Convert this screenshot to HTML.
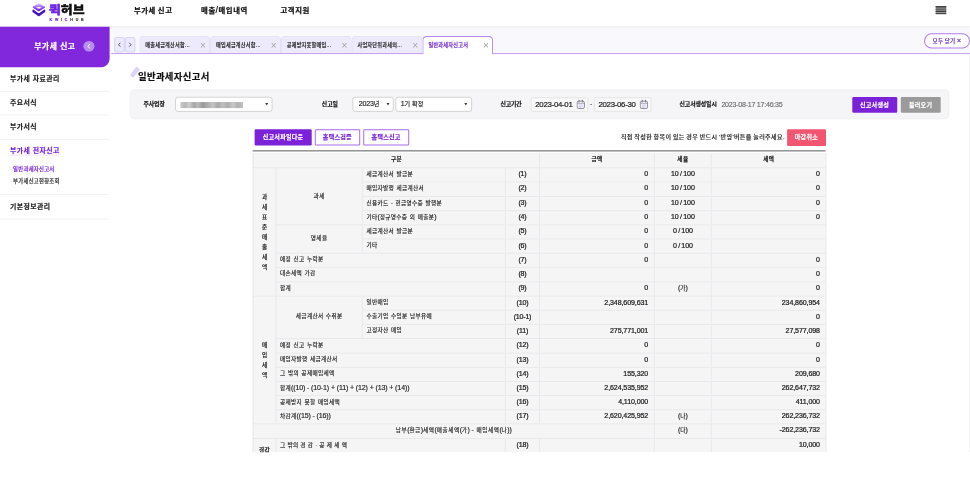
<!DOCTYPE html>
<html lang="ko"><head><meta charset="utf-8"><title>일반과세자신고서</title>
<style>
*{box-sizing:border-box;margin:0;padding:0}
html,body{width:970px;height:480px;overflow:hidden;background:#fff}
body{font-family:"Liberation Sans","Noto Sans CJK KR",sans-serif;color:#222}
#w{position:absolute;left:0;top:0;width:1920px;height:895px;overflow:hidden;transform:scale(0.505208);transform-origin:0 0;background:#fff;letter-spacing:0;-webkit-text-stroke:0.3px currentColor}
.a{position:absolute;white-space:nowrap}
.hd{left:0;top:0;width:1920px;height:53.5px;background:#fff;border-bottom:2px solid #ececee;z-index:0}
.menu{top:6.5px;height:26px;line-height:26px;font-size:14.5px;font-weight:700;color:#111;letter-spacing:1.25px;word-spacing:-1.6px;-webkit-text-stroke:.45px currentColor}
.lg1{left:96.5px;top:2px;height:36px;line-height:36px;font-size:22.5px;font-weight:900;letter-spacing:0;color:#111;transform:scaleX(1.13);transform-origin:0 50%;-webkit-text-stroke:0.9px currentColor}
.lg1 b{color:#6d24e2;font-weight:900}
.lg2{left:98px;top:34px;height:10px;line-height:10px;font-size:7px;font-weight:700;letter-spacing:5.6px;color:#333}
.lg2 b{color:#6a22d8}
.ham{left:1852px;top:12px;width:20.5px;height:16.4px;background:#aaa}
.ham i{display:block;height:2.6px;margin-bottom:2px;background:#3a3a3a}
.sbh{left:0;top:53px;width:216.5px;height:80px;background:#8228dc;border-radius:0 0 17px 0}
.sbt{left:68px;top:77.5px;height:28px;line-height:28px;font-size:15.3px;font-weight:700;color:#fff;letter-spacing:1.15px;-webkit-text-stroke:.45px currentColor}
.sbc{left:165.3px;top:80.8px;width:21.4px;height:21.4px;border-radius:50%;background:#b68eed}
.sbi{left:0;width:216px;border-bottom:1px solid #e4e4e4;padding-left:20px;font-size:13.6px;font-weight:700;color:#222;letter-spacing:.85px}
.sub{left:20px;font-size:10.6px;height:16px;line-height:16px;color:#333;letter-spacing:.5px;font-weight:500}
.sub s{text-decoration:none;-webkit-text-stroke:0;font-weight:400;color:#888;margin-right:-1.5px}
.tb{left:219.5px;top:53px;width:1700.5px;height:53.5px;background:linear-gradient(#f3f3f8,#f8f8fd 5px);border-bottom:2px solid #c6a0f3}
.nv{top:73.3px;width:21px;height:31px;background:#eceafc;border:2px solid #d7d4f2;border-radius:5px;font-size:14px;line-height:28px;text-align:center;color:#333;letter-spacing:0}
.tab{top:71px;width:140.5px;height:33.6px;background:#edeafb;border:1.5px solid #d2ccf2;font-weight:500;border-bottom:none;border-radius:9px 9px 0 0;font-size:10.2px;line-height:36px;padding-left:11px;color:#222;letter-spacing:.46px}
.tab.on{background:#fff;border:2px solid #b78bf1;border-bottom:none;height:37px;color:#6a1fd0;line-height:34px;padding-left:10.5px}
.tab u{position:absolute;right:7.5px;top:0;text-decoration:none;font-size:20px;color:#a5a5a5;letter-spacing:0;font-weight:300;-webkit-text-stroke:0}
.tab.on u{right:6.5px}
.pill{left:1829px;top:65.5px;width:90.5px;height:30.5px;border:2px solid #b17cf0;border-radius:16px;background:#fff;font-size:11px;line-height:26px;text-align:center;color:#5b1fc0;font-weight:500;letter-spacing:.55px;word-spacing:-1px}
.ttl{left:273px;top:137px;height:32px;line-height:32px;font-size:18.5px;font-weight:700;color:#111;letter-spacing:.75px;-webkit-text-stroke:.4px currentColor}
.sl{left:257.3px;top:132px;width:20px;height:22px}
.fb{left:257px;top:176.5px;width:1621.5px;height:59px;background:#f5f5f7;border:1px solid #ececf0;border-radius:9px}
.lb{top:193.5px;height:24px;line-height:24px;font-size:11.6px;font-weight:700;color:#1a1a1a;letter-spacing:-.15px;-webkit-text-stroke:.4px currentColor}
.sel{top:192px;height:29px;background:#fff;border:1.6px solid #b0b0b0;border-radius:5px;font-size:12px;line-height:26px;padding-left:11px;color:#222;letter-spacing:.4px}
.sel i{position:absolute;right:7.5px;top:11px;width:0;height:0;border:3.8px solid transparent;border-top:5px solid #3a3a3a;border-bottom:none}
.dt{top:192.5px;height:28px;background:#f9f9f9;border:1.7px solid #d6d6d6;border-radius:3px;font-size:15.5px;line-height:26px;padding-left:7.5px;color:#222;letter-spacing:-0.036em;-webkit-text-stroke:.4px currentColor}
.cal{position:absolute;right:5px;top:3.5px;width:17px;height:19px}
.btn{font-size:12px;font-weight:700;color:#fff;text-align:center;border-radius:2.5px;letter-spacing:.46px}
.tx{font-size:13px;color:#222}

.c{background:#f5f5f5;border-left:2.3px solid #e9e9ed;border-top:2.3px solid #e9e9ed;font-size:11.2px;color:#222;letter-spacing:.62px;word-spacing:.1em;font-weight:400}
.n{font-size:14px;letter-spacing:-0.015em;word-spacing:-1px;-webkit-text-stroke:0.45px currentColor;font-weight:400}
.p{font-size:14px;letter-spacing:-0.03em;-webkit-text-stroke:0.45px currentColor;font-weight:400}
.k{letter-spacing:-0.02em}
.e{font-size:14px;letter-spacing:-0.02em;word-spacing:0;font-weight:400;line-height:1px}
.v{display:flex;flex-direction:column;align-items:center;justify-content:center;line-height:20px;font-weight:500}
.hh{font-weight:700}
.vt{display:block;width:13px;white-space:normal;word-break:break-all;text-align:center;letter-spacing:0}
</style></head>
<body><div id="w">
<div class="a hd"></div>
<svg class="a" style="left:63.6px;top:5.6px" width="26" height="28" viewBox="0 0 26 28">
<defs><linearGradient id="g1" x1="0" y1="0" x2="0" y2="1"><stop offset="0" stop-color="#dccaff"/><stop offset=".5" stop-color="#9a58f7"/><stop offset="1" stop-color="#6a18ea"/></linearGradient></defs>
<path d="M1.8 15.6 L12.8 23.6 L23.8 15.6" fill="none" stroke="#4812c8" stroke-width="5" stroke-linecap="round" stroke-linejoin="round"/>
<path d="M12.8 1.6 L24.2 8.5 L12.8 15.4 L1.4 8.5 Z" fill="url(#g1)" stroke="url(#g1)" stroke-width="2.4" stroke-linejoin="round"/>
<path d="M12.8 7.4 L18.9 9.3 L12.8 11.4 L6.9 9.3 Z" fill="#fff"/>
</svg>
<div class="a lg1"><b>퀵</b>허브</div>
<div class="a lg2"><b>KWIC</b>HUB</div>
<div class="a menu" style="left:265px">부가세 신고</div>
<div class="a menu" style="left:398px">매출<span style="font-size:18px;line-height:1px;letter-spacing:.6px;font-weight:400;margin-left:-.5px">/</span>매입내역</div>
<div class="a menu" style="left:555px">고객지원</div>
<div class="a ham"><i></i><i></i><i></i><i></i></div>
<div class="a tb"></div>
<div class="a nv" style="left:225.5px"><svg width="17" height="27" viewBox="0.5 0.5 17 27"><path d="M10.8 10.2 L7 14 L10.8 17.8" fill="none" stroke="#333" stroke-width="1.7"/></svg></div><div class="a nv" style="left:246.5px"><svg width="17" height="27" viewBox="0.5 0.5 17 27"><path d="M7.2 10.2 L11 14 L7.2 17.8" fill="none" stroke="#333" stroke-width="1.7"/></svg></div>
<div class="a tab" style="left:275.5px">매출세금계산서합...<u>×</u></div>
<div class="a tab" style="left:415.5px">매입세금계산서합...<u>×</u></div>
<div class="a tab" style="left:555.5px">공제받지못할매입...<u>×</u></div>
<div class="a tab" style="left:695.5px">사업자단위과세의...<u>×</u></div>
<div class="a tab on" style="left:835.5px">일반과세자신고서<u>×</u></div>
<div class="a pill">모두 닫기 <span style="font-size:15px;line-height:1px;letter-spacing:0">×</span></div>
<div class="a sbh"></div><div class="a sbt">부가세 신고</div>
<div class="a sbc"></div><svg class="a" style="left:171px;top:86px" width="10" height="11" viewBox="0 0 10 11"><path d="M6.6 1.6 L2.9 5.5 L6.6 9.4" fill="none" stroke="#fff" stroke-width="1.9" stroke-linecap="round" stroke-linejoin="round"/></svg>
<div class="a sbi" style="top:133px;height:47.5px;line-height:46.5px">부가세 자료관리</div>
<div class="a sbi" style="top:180.5px;height:47.69999999999999px;line-height:46.69999999999999px">주요서식</div>
<div class="a sbi" style="top:228.2px;height:47.60000000000002px;line-height:46.60000000000002px">부가서식</div>
<div class="a sbi" style="top:275.8px;height:110.19999999999999px;line-height:43px;color:#7a22d8">부가세 전자신고</div>
<div class="a sbi" style="top:386px;height:48.39999999999998px;line-height:47.39999999999998px">기본정보관리</div>
<div class="a sub" style="top:326px;color:#7a22d8"><s>·</s> 일반과세자신고서</div>
<div class="a sub" style="top:350.5px"><s>·</s> 부가세신고현황조회</div>
<div class="a" style="left:1917.5px;top:107px;width:2.5px;height:790px;background:#f3f3f5"></div>
<div class="a" style="left:20px;top:305.5px;width:97px;height:2px;background:#f6e0f4"></div>
<svg class="a sl" viewBox="0 0 20 22"><path d="M13 0 L20 5 L6.5 22 L0 17 Z" fill="#ddd2f8"/></svg>
<div class="a ttl">일반과세자신고서</div>
<div class="a fb"></div>
<div class="a lb" style="left:284px">주사업장</div>
<div class="a sel" style="left:347px;width:192px"><i></i></div>
<div class="a" style="left:357px;top:201.5px;width:124px;height:12.5px;background:linear-gradient(90deg,#c4c4c4 0,#b0b0b0 8%,#c8c8c8 14%,#9c9c9c 22%,#b4b4b4 28%,#8e8e8e 36%,#a6a6a6 44%,#bcbcbc 52%,#a0a0a0 60%,#b8b8b8 68%,#a4a4a4 76%,#c2c2c2 84%,#a8a8a8 92%,#bdbdbd 100%);filter:blur(1.5px);opacity:.9"></div>
<div class="a lb" style="left:637px">신고일</div>
<div class="a sel" style="left:698px;width:81px"><span class="e">2023</span>년<i></i></div>
<div class="a sel" style="left:783px;width:150.5px;padding-left:9px"><span class="e">1</span>기 확정<i></i></div>
<div class="a lb" style="left:990.5px">신고기간</div>
<div class="a dt" style="left:1051px;width:113px">2023-04-01<svg class="cal" viewBox="0 0 17 19"><rect x="1.2" y="3.2" width="14.6" height="14.6" rx="3.2" fill="#f7f5fd" stroke="#74747e" stroke-width="1.6"/><path d="M1.5 7.6H15.5" stroke="#85858f" stroke-width="1.2"/><path d="M5.2 1v4M11.8 1v4" stroke="#74747e" stroke-width="1.7" stroke-linecap="round"/><path d="M4.5 10.8h8M4.5 13.2h8M4.5 15.4h5" stroke="#c3b3ee" stroke-width="1.2"/></svg></div>
<div class="a tx" style="left:1168px;top:196px;line-height:20px">-</div>
<div class="a dt" style="left:1176px;width:112.5px">2023-06-30<svg class="cal" viewBox="0 0 17 19"><rect x="1.2" y="3.2" width="14.6" height="14.6" rx="3.2" fill="#f7f5fd" stroke="#74747e" stroke-width="1.6"/><path d="M1.5 7.6H15.5" stroke="#85858f" stroke-width="1.2"/><path d="M5.2 1v4M11.8 1v4" stroke="#74747e" stroke-width="1.7" stroke-linecap="round"/><path d="M4.5 10.8h8M4.5 13.2h8M4.5 15.4h5" stroke="#c3b3ee" stroke-width="1.2"/></svg></div>
<div class="a lb" style="left:1345px">신고서생성일시</div>
<div class="a" style="left:1428px;top:194px;line-height:24px;font-size:14px;color:#6e6e6e;letter-spacing:-0.035em">2023-08-17 17:46:35</div>
<div class="a btn" style="left:1686.5px;top:192px;width:89px;height:30.5px;line-height:30px;background:#7b22d8">신고서생성</div>
<div class="a btn" style="left:1783px;top:192px;width:78.5px;height:30.5px;line-height:30px;background:#9a9a9a">불러오기</div>
<div class="a btn" style="left:503.5px;top:255.5px;width:113.5px;height:32.5px;line-height:32px;background:#7b22d8">신고서파일다운</div>
<div class="a btn" style="left:623px;top:255.5px;width:89.5px;height:32.5px;line-height:29px;background:#fff;border:2px solid #a76cf0;color:#7a22d8;font-weight:700">홈택스검증</div>
<div class="a btn" style="left:719px;top:255.5px;width:90.5px;height:32.5px;line-height:29px;background:#fff;border:2px solid #a76cf0;color:#7a22d8;font-weight:700">홈택스신고</div>
<div class="a" style="left:1229px;top:260px;line-height:22px;font-size:12px;color:#222;letter-spacing:.72px;word-spacing:-1.1px;font-weight:500;color:#2a2a2a">직접 작성한 항목이 있는 경우 반드시 '반영'버튼을 눌러주세요.</div>
<div class="a btn" style="left:1557.5px;top:256px;width:77.5px;height:32.5px;line-height:32px;background:#f1556f">마감취소</div>
<div class="a" style="left:500.3px;top:296.8px;width:1133.7px;height:3.6px;background:#939393"></div>
<div class="a c hh" style="left:500.30px;top:302.80px;width:567.00px;height:28.40px;line-height:23.80px;text-align:center;border-top:none;">구분</div>
<div class="a c hh" style="left:1067.30px;top:302.80px;width:226.70px;height:28.40px;line-height:23.80px;text-align:center;border-top:none;">금액</div>
<div class="a c hh" style="left:1294.00px;top:302.80px;width:113.40px;height:28.40px;line-height:23.80px;text-align:center;border-top:none;">세율</div>
<div class="a c hh" style="left:1407.40px;top:302.80px;width:226.60px;height:28.40px;line-height:23.80px;text-align:center;border-top:none;">세액</div>
<div class="a c v" style="left:500.30px;top:331.20px;width:44.80px;height:253.62px;"><span class="vt">과세표준매출세액</span></div>
<div class="a c " style="left:545.10px;top:331.20px;width:171.20px;height:112.72px;line-height:108.12px;text-align:center;">과세</div>
<div class="a c " style="left:545.10px;top:443.92px;width:171.20px;height:56.36px;line-height:51.76px;text-align:center;">영세율</div>
<div class="a c v" style="left:500.30px;top:584.82px;width:44.80px;height:253.62px;"><span class="vt">매입세액</span></div>
<div class="a c " style="left:545.10px;top:584.82px;width:171.20px;height:84.54px;line-height:79.94px;text-align:center;">세금계산서 수취분</div>
<div class="a c " style="left:716.30px;top:331.20px;width:282.70px;height:28.18px;line-height:23.58px;text-align:left;padding-left:7px;">세금계산서 발급분</div>
<div class="a c p" style="left:999.00px;top:331.20px;width:68.30px;height:28.18px;line-height:23.58px;text-align:center;">(1)</div>
<div class="a c n" style="left:1067.30px;top:331.20px;width:226.70px;height:28.18px;line-height:23.58px;text-align:right;padding-right:11px;">0</div>
<div class="a c n" style="left:1294.00px;top:331.20px;width:113.40px;height:28.18px;line-height:23.58px;text-align:center;">10 / 100</div>
<div class="a c n" style="left:1407.40px;top:331.20px;width:226.60px;height:28.18px;line-height:23.58px;text-align:right;padding-right:11px;">0</div>
<div class="a c " style="left:716.30px;top:359.38px;width:282.70px;height:28.18px;line-height:23.58px;text-align:left;padding-left:7px;">매입자발행 세금계산서</div>
<div class="a c p" style="left:999.00px;top:359.38px;width:68.30px;height:28.18px;line-height:23.58px;text-align:center;">(2)</div>
<div class="a c n" style="left:1067.30px;top:359.38px;width:226.70px;height:28.18px;line-height:23.58px;text-align:right;padding-right:11px;">0</div>
<div class="a c n" style="left:1294.00px;top:359.38px;width:113.40px;height:28.18px;line-height:23.58px;text-align:center;">10 / 100</div>
<div class="a c n" style="left:1407.40px;top:359.38px;width:226.60px;height:28.18px;line-height:23.58px;text-align:right;padding-right:11px;">0</div>
<div class="a c " style="left:716.30px;top:387.56px;width:282.70px;height:28.18px;line-height:23.58px;text-align:left;padding-left:7px;">신용카드 - 현금영수증 발행분</div>
<div class="a c p" style="left:999.00px;top:387.56px;width:68.30px;height:28.18px;line-height:23.58px;text-align:center;">(3)</div>
<div class="a c n" style="left:1067.30px;top:387.56px;width:226.70px;height:28.18px;line-height:23.58px;text-align:right;padding-right:11px;">0</div>
<div class="a c n" style="left:1294.00px;top:387.56px;width:113.40px;height:28.18px;line-height:23.58px;text-align:center;">10 / 100</div>
<div class="a c n" style="left:1407.40px;top:387.56px;width:226.60px;height:28.18px;line-height:23.58px;text-align:right;padding-right:11px;">0</div>
<div class="a c " style="left:716.30px;top:415.74px;width:282.70px;height:28.18px;line-height:23.58px;text-align:left;padding-left:7px;">기타<span class="e">(</span>정규영수증 외 매출분<span class="e">)</span></div>
<div class="a c p" style="left:999.00px;top:415.74px;width:68.30px;height:28.18px;line-height:23.58px;text-align:center;">(4)</div>
<div class="a c n" style="left:1067.30px;top:415.74px;width:226.70px;height:28.18px;line-height:23.58px;text-align:right;padding-right:11px;">0</div>
<div class="a c n" style="left:1294.00px;top:415.74px;width:113.40px;height:28.18px;line-height:23.58px;text-align:center;">10 / 100</div>
<div class="a c n" style="left:1407.40px;top:415.74px;width:226.60px;height:28.18px;line-height:23.58px;text-align:right;padding-right:11px;">0</div>
<div class="a c " style="left:716.30px;top:443.92px;width:282.70px;height:28.18px;line-height:23.58px;text-align:left;padding-left:7px;">세금계산서 발급분</div>
<div class="a c p" style="left:999.00px;top:443.92px;width:68.30px;height:28.18px;line-height:23.58px;text-align:center;">(5)</div>
<div class="a c n" style="left:1067.30px;top:443.92px;width:226.70px;height:28.18px;line-height:23.58px;text-align:right;padding-right:11px;">0</div>
<div class="a c n" style="left:1294.00px;top:443.92px;width:113.40px;height:28.18px;line-height:23.58px;text-align:center;">0 / 100</div>
<div class="a c n" style="left:1407.40px;top:443.92px;width:226.60px;height:28.18px;line-height:23.58px;text-align:right;padding-right:11px;"></div>
<div class="a c " style="left:716.30px;top:472.10px;width:282.70px;height:28.18px;line-height:23.58px;text-align:left;padding-left:7px;">기타</div>
<div class="a c p" style="left:999.00px;top:472.10px;width:68.30px;height:28.18px;line-height:23.58px;text-align:center;">(6)</div>
<div class="a c n" style="left:1067.30px;top:472.10px;width:226.70px;height:28.18px;line-height:23.58px;text-align:right;padding-right:11px;">0</div>
<div class="a c n" style="left:1294.00px;top:472.10px;width:113.40px;height:28.18px;line-height:23.58px;text-align:center;">0 / 100</div>
<div class="a c n" style="left:1407.40px;top:472.10px;width:226.60px;height:28.18px;line-height:23.58px;text-align:right;padding-right:11px;"></div>
<div class="a c " style="left:545.10px;top:500.28px;width:453.90px;height:28.18px;line-height:23.58px;text-align:left;padding-left:7px;">예정 신고 누락분</div>
<div class="a c p" style="left:999.00px;top:500.28px;width:68.30px;height:28.18px;line-height:23.58px;text-align:center;">(7)</div>
<div class="a c n" style="left:1067.30px;top:500.28px;width:226.70px;height:28.18px;line-height:23.58px;text-align:right;padding-right:11px;">0</div>
<div class="a c k" style="left:1294.00px;top:500.28px;width:113.40px;height:28.18px;line-height:23.58px;text-align:center;"></div>
<div class="a c n" style="left:1407.40px;top:500.28px;width:226.60px;height:28.18px;line-height:23.58px;text-align:right;padding-right:11px;">0</div>
<div class="a c " style="left:545.10px;top:528.46px;width:453.90px;height:28.18px;line-height:23.58px;text-align:left;padding-left:7px;">대손세액 가감</div>
<div class="a c p" style="left:999.00px;top:528.46px;width:68.30px;height:28.18px;line-height:23.58px;text-align:center;">(8)</div>
<div class="a c n" style="left:1067.30px;top:528.46px;width:226.70px;height:28.18px;line-height:23.58px;text-align:right;padding-right:11px;"></div>
<div class="a c k" style="left:1294.00px;top:528.46px;width:113.40px;height:28.18px;line-height:23.58px;text-align:center;"></div>
<div class="a c n" style="left:1407.40px;top:528.46px;width:226.60px;height:28.18px;line-height:23.58px;text-align:right;padding-right:11px;">0</div>
<div class="a c " style="left:545.10px;top:556.64px;width:453.90px;height:28.18px;line-height:23.58px;text-align:left;padding-left:7px;">합계</div>
<div class="a c p" style="left:999.00px;top:556.64px;width:68.30px;height:28.18px;line-height:23.58px;text-align:center;">(9)</div>
<div class="a c n" style="left:1067.30px;top:556.64px;width:226.70px;height:28.18px;line-height:23.58px;text-align:right;padding-right:11px;">0</div>
<div class="a c k" style="left:1294.00px;top:556.64px;width:113.40px;height:28.18px;line-height:23.58px;text-align:center;"><span class="e">(</span>가<span class="e">)</span></div>
<div class="a c n" style="left:1407.40px;top:556.64px;width:226.60px;height:28.18px;line-height:23.58px;text-align:right;padding-right:11px;">0</div>
<div class="a c " style="left:716.30px;top:584.82px;width:282.70px;height:28.18px;line-height:23.58px;text-align:left;padding-left:7px;">일반매입</div>
<div class="a c p" style="left:999.00px;top:584.82px;width:68.30px;height:28.18px;line-height:23.58px;text-align:center;">(10)</div>
<div class="a c n" style="left:1067.30px;top:584.82px;width:226.70px;height:28.18px;line-height:23.58px;text-align:right;padding-right:11px;">2,348,609,631</div>
<div class="a c k" style="left:1294.00px;top:584.82px;width:113.40px;height:28.18px;line-height:23.58px;text-align:center;"></div>
<div class="a c n" style="left:1407.40px;top:584.82px;width:226.60px;height:28.18px;line-height:23.58px;text-align:right;padding-right:11px;">234,860,954</div>
<div class="a c " style="left:716.30px;top:613.00px;width:282.70px;height:28.18px;line-height:23.58px;text-align:left;padding-left:7px;">수출기업 수입분 납부유예</div>
<div class="a c p" style="left:999.00px;top:613.00px;width:68.30px;height:28.18px;line-height:23.58px;text-align:center;">(10-1)</div>
<div class="a c n" style="left:1067.30px;top:613.00px;width:226.70px;height:28.18px;line-height:23.58px;text-align:right;padding-right:11px;"></div>
<div class="a c k" style="left:1294.00px;top:613.00px;width:113.40px;height:28.18px;line-height:23.58px;text-align:center;"></div>
<div class="a c n" style="left:1407.40px;top:613.00px;width:226.60px;height:28.18px;line-height:23.58px;text-align:right;padding-right:11px;">0</div>
<div class="a c " style="left:716.30px;top:641.18px;width:282.70px;height:28.18px;line-height:23.58px;text-align:left;padding-left:7px;">고정자산 매입</div>
<div class="a c p" style="left:999.00px;top:641.18px;width:68.30px;height:28.18px;line-height:23.58px;text-align:center;">(11)</div>
<div class="a c n" style="left:1067.30px;top:641.18px;width:226.70px;height:28.18px;line-height:23.58px;text-align:right;padding-right:11px;">275,771,001</div>
<div class="a c k" style="left:1294.00px;top:641.18px;width:113.40px;height:28.18px;line-height:23.58px;text-align:center;"></div>
<div class="a c n" style="left:1407.40px;top:641.18px;width:226.60px;height:28.18px;line-height:23.58px;text-align:right;padding-right:11px;">27,577,098</div>
<div class="a c " style="left:545.10px;top:669.36px;width:453.90px;height:28.18px;line-height:23.58px;text-align:left;padding-left:7px;">예정 신고 누락분</div>
<div class="a c p" style="left:999.00px;top:669.36px;width:68.30px;height:28.18px;line-height:23.58px;text-align:center;">(12)</div>
<div class="a c n" style="left:1067.30px;top:669.36px;width:226.70px;height:28.18px;line-height:23.58px;text-align:right;padding-right:11px;">0</div>
<div class="a c k" style="left:1294.00px;top:669.36px;width:113.40px;height:28.18px;line-height:23.58px;text-align:center;"></div>
<div class="a c n" style="left:1407.40px;top:669.36px;width:226.60px;height:28.18px;line-height:23.58px;text-align:right;padding-right:11px;">0</div>
<div class="a c " style="left:545.10px;top:697.54px;width:453.90px;height:28.18px;line-height:23.58px;text-align:left;padding-left:7px;">매입자발행 세금계산서</div>
<div class="a c p" style="left:999.00px;top:697.54px;width:68.30px;height:28.18px;line-height:23.58px;text-align:center;">(13)</div>
<div class="a c n" style="left:1067.30px;top:697.54px;width:226.70px;height:28.18px;line-height:23.58px;text-align:right;padding-right:11px;">0</div>
<div class="a c k" style="left:1294.00px;top:697.54px;width:113.40px;height:28.18px;line-height:23.58px;text-align:center;"></div>
<div class="a c n" style="left:1407.40px;top:697.54px;width:226.60px;height:28.18px;line-height:23.58px;text-align:right;padding-right:11px;">0</div>
<div class="a c " style="left:545.10px;top:725.72px;width:453.90px;height:28.18px;line-height:23.58px;text-align:left;padding-left:7px;">그 밖의 공제매입세액</div>
<div class="a c p" style="left:999.00px;top:725.72px;width:68.30px;height:28.18px;line-height:23.58px;text-align:center;">(14)</div>
<div class="a c n" style="left:1067.30px;top:725.72px;width:226.70px;height:28.18px;line-height:23.58px;text-align:right;padding-right:11px;">155,320</div>
<div class="a c k" style="left:1294.00px;top:725.72px;width:113.40px;height:28.18px;line-height:23.58px;text-align:center;"></div>
<div class="a c n" style="left:1407.40px;top:725.72px;width:226.60px;height:28.18px;line-height:23.58px;text-align:right;padding-right:11px;">209,680</div>
<div class="a c " style="left:545.10px;top:753.90px;width:453.90px;height:28.18px;line-height:23.58px;text-align:left;padding-left:7px;">합계<span class="e">((10) - (10-1) + (11) + (12) + (13) + (14))</span></div>
<div class="a c p" style="left:999.00px;top:753.90px;width:68.30px;height:28.18px;line-height:23.58px;text-align:center;">(15)</div>
<div class="a c n" style="left:1067.30px;top:753.90px;width:226.70px;height:28.18px;line-height:23.58px;text-align:right;padding-right:11px;">2,624,535,952</div>
<div class="a c k" style="left:1294.00px;top:753.90px;width:113.40px;height:28.18px;line-height:23.58px;text-align:center;"></div>
<div class="a c n" style="left:1407.40px;top:753.90px;width:226.60px;height:28.18px;line-height:23.58px;text-align:right;padding-right:11px;">262,647,732</div>
<div class="a c " style="left:545.10px;top:782.08px;width:453.90px;height:28.18px;line-height:23.58px;text-align:left;padding-left:7px;">공제받지 못할 매입세액</div>
<div class="a c p" style="left:999.00px;top:782.08px;width:68.30px;height:28.18px;line-height:23.58px;text-align:center;">(16)</div>
<div class="a c n" style="left:1067.30px;top:782.08px;width:226.70px;height:28.18px;line-height:23.58px;text-align:right;padding-right:11px;">4,110,000</div>
<div class="a c k" style="left:1294.00px;top:782.08px;width:113.40px;height:28.18px;line-height:23.58px;text-align:center;"></div>
<div class="a c n" style="left:1407.40px;top:782.08px;width:226.60px;height:28.18px;line-height:23.58px;text-align:right;padding-right:11px;">411,000</div>
<div class="a c " style="left:545.10px;top:810.26px;width:453.90px;height:28.18px;line-height:23.58px;text-align:left;padding-left:7px;">차감계<span class="e">((15) - (16))</span></div>
<div class="a c p" style="left:999.00px;top:810.26px;width:68.30px;height:28.18px;line-height:23.58px;text-align:center;">(17)</div>
<div class="a c n" style="left:1067.30px;top:810.26px;width:226.70px;height:28.18px;line-height:23.58px;text-align:right;padding-right:11px;">2,620,425,952</div>
<div class="a c k" style="left:1294.00px;top:810.26px;width:113.40px;height:28.18px;line-height:23.58px;text-align:center;"><span class="e">(</span>나<span class="e">)</span></div>
<div class="a c n" style="left:1407.40px;top:810.26px;width:226.60px;height:28.18px;line-height:23.58px;text-align:right;padding-right:11px;">262,236,732</div>
<div class="a c " style="left:500.30px;top:838.44px;width:793.70px;height:28.18px;line-height:23.58px;text-align:center;letter-spacing:1.04px;">납부<span class="e">(</span>환급<span class="e">)</span>세액<span class="e">(</span>매출세액<span class="e">(</span>가<span class="e">) -</span> 매입세액<span class="e">(</span>나<span class="e">))</span></div>
<div class="a c k" style="left:1294.00px;top:838.44px;width:113.40px;height:28.18px;line-height:23.58px;text-align:center;"><span class="e">(</span>다<span class="e">)</span></div>
<div class="a c n" style="left:1407.40px;top:838.44px;width:226.60px;height:28.18px;line-height:23.58px;text-align:right;padding-right:11px;">-262,236,732</div>
<div class="a c " style="left:500.30px;top:866.62px;width:44.80px;height:56.36px;line-height:51.76px;text-align:center;font-weight:700;line-height:42px;">경감</div>
<div class="a c " style="left:545.10px;top:866.62px;width:453.90px;height:28.18px;line-height:23.58px;text-align:left;padding-left:7px;"><span style="word-spacing:0.1px">그 밖의 경 감 · 공 제 세 액</span></div>
<div class="a c p" style="left:999.00px;top:866.62px;width:68.30px;height:28.18px;line-height:23.58px;text-align:center;">(18)</div>
<div class="a c n" style="left:1067.30px;top:866.62px;width:226.70px;height:28.18px;line-height:23.58px;text-align:right;padding-right:11px;"></div>
<div class="a c k" style="left:1294.00px;top:866.62px;width:113.40px;height:28.18px;line-height:23.58px;text-align:center;"></div>
<div class="a c n" style="left:1407.40px;top:866.62px;width:226.60px;height:28.18px;line-height:23.58px;text-align:right;padding-right:11px;">10,000</div>
<div class="a" style="left:1634px;top:302.8px;width:2.3px;height:600px;background:#e9e9ed"></div>
</div></body></html>
